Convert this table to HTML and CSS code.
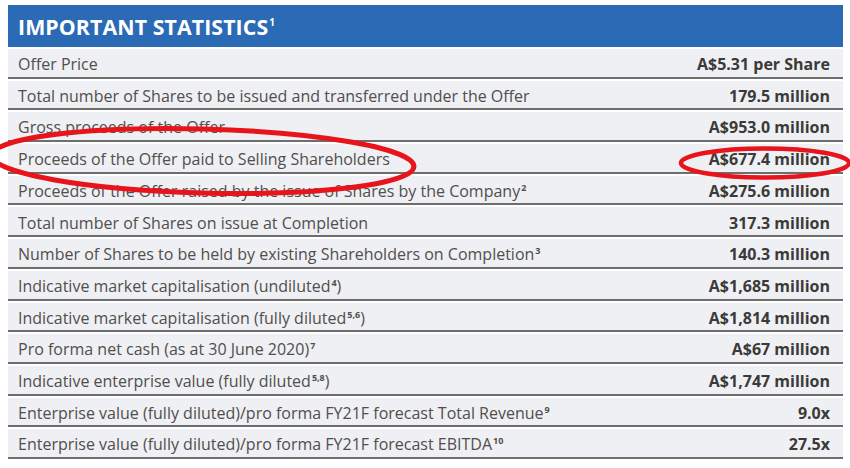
FILE: index.html
```html
<!DOCTYPE html>
<html>
<head>
<meta charset="utf-8">
<link rel="stylesheet" href="styles.css">
</head>
<body>
<div class="stats">
  <div class="title">IMPORTANT STATISTICS<sup class="tfn">1</sup></div>
  <div class="row"><span class="lbl">Offer Price</span><span class="val">A$5.31 per Share</span></div>
  <div class="row"><span class="lbl">Total number of Shares to be issued and transferred under the Offer</span><span class="val">179.5 million</span></div>
  <div class="row"><span class="lbl">Gross proceeds of the Offer</span><span class="val">A$953.0 million</span></div>
  <div class="row"><span class="lbl">Proceeds of the Offer paid to Selling Shareholders</span><span class="val">A$677.4 million</span></div>
  <div class="row"><span class="lbl">Proceeds of the Offer raised by the issue of Shares by the Company<sup class="fn">2</sup></span><span class="val">A$275.6 million</span></div>
  <div class="row"><span class="lbl">Total number of Shares on issue at Completion</span><span class="val">317.3 million</span></div>
  <div class="row"><span class="lbl">Number of Shares to be held by existing Shareholders on Completion<sup class="fn">3</sup></span><span class="val">140.3 million</span></div>
  <div class="row"><span class="lbl">Indicative market capitalisation (undiluted<sup class="fn">4</sup>)</span><span class="val">A$1,685 million</span></div>
  <div class="row"><span class="lbl">Indicative market capitalisation (fully diluted<sup class="fn">5,6</sup>)</span><span class="val">A$1,814 million</span></div>
  <div class="row"><span class="lbl">Pro forma net cash (as at 30 June 2020)<sup class="fn">7</sup></span><span class="val">A$67 million</span></div>
  <div class="row"><span class="lbl">Indicative enterprise value (fully diluted<sup class="fn">5,8</sup>)</span><span class="val">A$1,747 million</span></div>
  <div class="row"><span class="lbl">Enterprise value (fully diluted)/pro forma FY21F forecast Total Revenue<sup class="fn">9</sup></span><span class="val">9.0x</span></div>
  <div class="row"><span class="lbl">Enterprise value (fully diluted)/pro forma FY21F forecast EBITDA<sup class="fn">10</sup></span><span class="val">27.5x</span></div>
</div>
<svg class="marks" width="850" height="468" viewBox="0 0 850 468">
  <ellipse cx="203" cy="161" rx="211" ry="32" transform="rotate(1.5 203 161)" fill="none" stroke="#e8141b" stroke-width="5"/>
  <ellipse cx="765" cy="163" rx="84" ry="14.5" fill="none" stroke="#e8141b" stroke-width="4.5"/>
</svg>
</body>
</html>
```
FILE: styles.css
```css
html, body {
  margin: 0;
  padding: 0;
  background: #ffffff;
}
body {
  position: relative;
  width: 850px;
  height: 468px;
  overflow: hidden;
  font-family: "Open Sans", "Noto Sans", sans-serif;
}
.stats {
  margin: 5px 0 0 8px;
  width: 835px;
}
.title {
  height: 42px;
  background: #2b6ab4;
  color: #ffffff;
  font-weight: 700;
  font-size: 21.3px;
  line-height: 44px;
  padding-left: 10px;
  letter-spacing: 0.1px;
}
.tfn {
  font-size: 10px;
  vertical-align: 9px;
  line-height: 0;
  margin-left: 1px;
}
.row {
  display: flex;
  justify-content: space-between;
  align-items: center;
  height: 25.2px;
  background: #eef0f3;
  border-bottom: 2px solid #6e6e6e;
  margin-top: 2px;
  padding: 2.5px 13px 0 10px;
  box-sizing: content-box;
  font-size: 16px;
  line-height: 20px;
  color: #514e4b;
}
.row:first-of-type {
  margin-top: 0;
}
.val {
  font-weight: 700;
  color: #3c3a38;
}
.fn {
  font-size: 9px;
  font-weight: 700;
  vertical-align: 6px;
  line-height: 0;
  margin-left: 1px;
}
.marks {
  position: absolute;
  left: 0;
  top: 0;
  pointer-events: none;
}
```
